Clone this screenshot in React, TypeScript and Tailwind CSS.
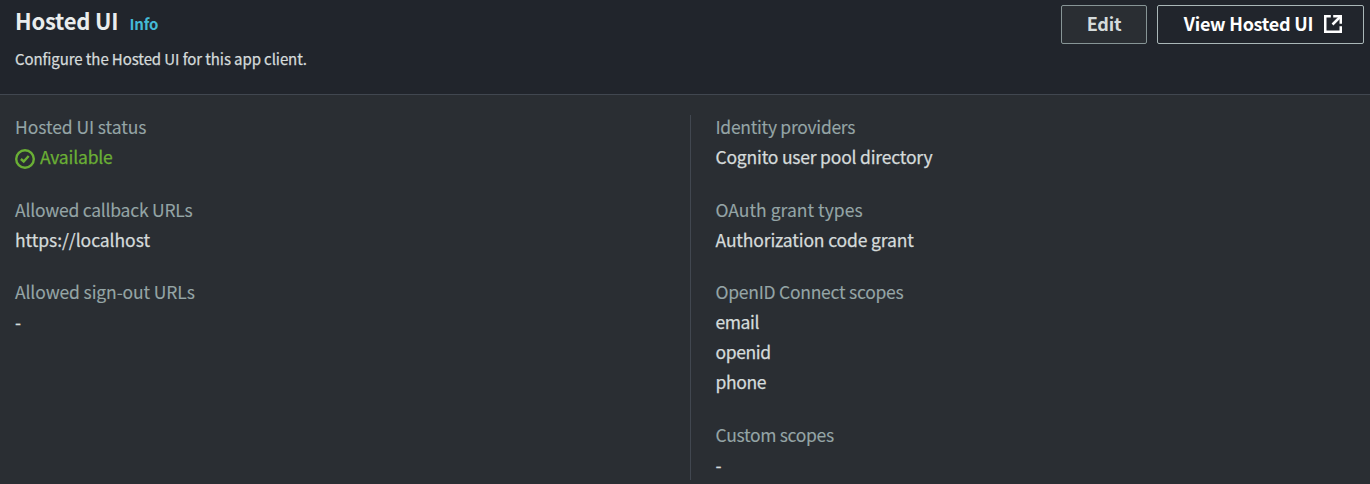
import type { ReactNode } from "react";

function Field({ label, tracking, children }: { label: string; tracking: string; children: ReactNode }) {
  return (
    <div className="leading-[30px]">
      <dt className={`text-[#95a5a6] [-webkit-text-stroke:0.12px_currentColor] ${tracking}`}>{label}</dt>
      <dd className="text-[#d5dbdb] [-webkit-text-stroke:0.25px_currentColor]">{children}</dd>
    </div>
  );
}

function CheckCircle() {
  return (
    <svg className="mt-[3px] h-5 w-5 shrink-0" viewBox="0 0 20 20" fill="none" stroke="currentColor" strokeWidth="2.4">
      <circle cx="10" cy="10" r="8.8" />
      <path d="M5.9 10 8.7 12.5 13.7 7" />
    </svg>
  );
}

function ExternalIcon() {
  return (
    <svg className="h-[18px] w-[18px] shrink-0" viewBox="0 0 18 18" fill="none" stroke="currentColor" strokeWidth="2.5">
      <path d="M6.8 1.25H1.25V16.75H16.75V11.2" />
      <path d="M9.2 1.25H16.75V8.8" />
      <path d="M16.5 1.5 8.5 9.5" />
    </svg>
  );
}

export default function App() {
  return (
    <main className="flex h-[484px] w-full flex-col bg-[#2a2e33] font-['Noto_Sans_CJK_SC','Noto_Sans',sans-serif] text-[17.5px]">
      <header className="flex h-[95px] shrink-0 justify-between border-b border-[#414750] bg-[#21252c] pl-[15px] pr-[6px]">
        <div>
          <div className="mt-[5px] flex items-baseline gap-[11px] whitespace-nowrap leading-[30px]">
            <h1 className="text-[22px] font-bold tracking-[-0.2px] text-[#eaeded]">Hosted UI</h1>
            <a className="text-[15px] font-bold tracking-[-0.15px] text-[#44b9d6]">Info</a>
          </div>
          <p className="mt-[8px] text-[15px] leading-6 tracking-[-0.09px] text-[#d5dbdb] [-webkit-text-stroke:0.25px_currentColor]">
            Configure the Hosted UI for this app client.
          </p>
        </div>
        <div className="mt-[5px] flex h-[39px] gap-[10px] text-[18px] font-bold">
          <button className="flex w-[86px] items-center justify-center rounded-[2px] border border-[#879596] bg-[#2a2e33] pb-[3px] tracking-[-0.2px] text-[#d5dbdb]">
            Edit
          </button>
          <button className="flex w-[207px] items-center rounded-[2px] border border-[#aab7b8] pl-[25px] text-white">
            <span className="w-[131px] whitespace-nowrap pb-[3px] tracking-[-0.24px]">View Hosted UI</span>
            <span className="ml-[10px] pb-px">
              <ExternalIcon />
            </span>
          </button>
        </div>
      </header>

      <div className="flex pt-5">
        <dl className="-mt-[3px] flex w-[690px] flex-col gap-[22.5px] pl-[15px]">
          <Field label="Hosted UI status" tracking="tracking-[-0.08px]">
            <span className="flex items-center gap-[5px] tracking-[-0.18px] text-[#6aaf35]">
              <CheckCircle />
              Available
            </span>
          </Field>
          <Field label="Allowed callback URLs" tracking="tracking-[-0.23px]">
            <span className="tracking-[-0.05px]">https://localhost</span>
          </Field>
          <Field label="Allowed sign-out URLs" tracking="tracking-[-0.12px]">
            -
          </Field>
        </dl>
        <div className="h-[365px] border-l border-[#414750]">
          <dl className="-mt-[3px] flex flex-col gap-[22.5px] pl-[24.5px]">
            <Field label="Identity providers" tracking="tracking-[-0.28px]">
              <span className="tracking-[-0.2px]">Cognito user pool directory</span>
            </Field>
            <Field label="OAuth grant types" tracking="tracking-[0.02px]">
              <span className="tracking-[-0.14px]">Authorization code grant</span>
            </Field>
            <Field label="OpenID Connect scopes" tracking="tracking-[-0.26px]">
              <ul className="tracking-[-0.4px]">
                <li>email</li>
                <li>openid</li>
                <li>phone</li>
              </ul>
            </Field>
            <Field label="Custom scopes" tracking="tracking-[-0.32px]">
              -
            </Field>
          </dl>
        </div>
      </div>
    </main>
  );
}
